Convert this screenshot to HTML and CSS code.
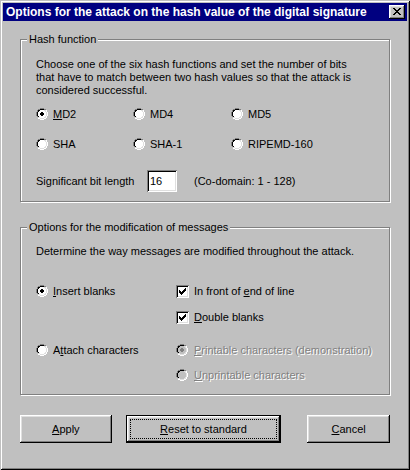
FILE: index.html
```html
<!DOCTYPE html>
<html lang="en">
<head>
<meta charset="utf-8">
<title>Options</title>
<link rel="stylesheet" href="styles.css">
</head>
<body>
<svg class="defs" width="0" height="0" aria-hidden="true">
  <defs>
    <symbol id="radio-frame" viewBox="0 0 12 12">
      <path fill="#808080" d="M4 0h4v1H4zM2 1h2v1H2zM8 1h2v1H8zM1 2h1v2H1zM0 4h1v4H0zM1 8h1v1H1z"/>
      <path fill="#000" d="M4 1h4v1H4zM2 2h2v1H2zM2 3h1v1H2zM1 4h1v4H1zM2 8h1v1H2z"/>
      <path fill="#dfdfdf" d="M8 2h2v1H8zM9 3h1v1H9zM10 4h1v4h-1zM9 8h1v1H9zM2 9h2v1H2zM8 9h2v1H8zM4 10h4v1H4z"/>
      <path fill="#fff" d="M10 2h1v2h-1zM11 4h1v4h-1zM10 8h1v2h-1zM2 10h2v1H2zM8 10h2v1H8zM4 11h4v1H4z"/>
    </symbol>
    <symbol id="radio-fill" viewBox="0 0 12 12">
      <path d="M4 2h4v1H4zM3 3h6v1H3zM2 4h8v4H2zM3 8h6v1H3zM4 9h4v1H4z"/>
    </symbol>
    <symbol id="radio-dot" viewBox="0 0 12 12">
      <path d="M5 4h2v1H5zM4 5h4v2H4zM5 7h2v1H5z"/>
    </symbol>
  </defs>
</svg>

<div class="window">
  <div class="titlebar">
    <span class="title">Options for the attack on the hash value of the digital signature</span>
    <span class="close">
      <svg width="8" height="7" viewBox="0 0 8 7" shape-rendering="crispEdges"><path fill="#000" d="M0 0h2v1H0zM6 0h2v1H6zM1 1h2v1H1zM5 1h2v1H5zM2 2h4v1H2zM3 3h2v1H3zM2 4h4v1H2zM1 5h2v1H1zM5 5h2v1H5zM0 6h2v1H0zM6 6h2v1H6z"/></svg>
    </span>
  </div>

  <div class="content">
    <div class="group group-hash">
      <span class="legend">Hash function</span>
      <p class="desc">Choose one of the six hash functions and set the number of bits<br>that have to match between two hash values so that the attack is<br>considered successful.</p>

      <div class="radio-grid">
        <div class="opt"><svg class="radio" width="12" height="12" shape-rendering="crispEdges"><use href="#radio-fill" fill="#fff"/><use href="#radio-frame"/><use href="#radio-dot" fill="#000"/></svg><span class="lbl"><u>M</u>D2</span></div>
        <div class="opt"><svg class="radio" width="12" height="12" shape-rendering="crispEdges"><use href="#radio-fill" fill="#fff"/><use href="#radio-frame"/></svg><span class="lbl">MD4</span></div>
        <div class="opt"><svg class="radio" width="12" height="12" shape-rendering="crispEdges"><use href="#radio-fill" fill="#fff"/><use href="#radio-frame"/></svg><span class="lbl">MD5</span></div>
        <div class="opt"><svg class="radio" width="12" height="12" shape-rendering="crispEdges"><use href="#radio-fill" fill="#fff"/><use href="#radio-frame"/></svg><span class="lbl">SHA</span></div>
        <div class="opt"><svg class="radio" width="12" height="12" shape-rendering="crispEdges"><use href="#radio-fill" fill="#fff"/><use href="#radio-frame"/></svg><span class="lbl">SHA-1</span></div>
        <div class="opt"><svg class="radio" width="12" height="12" shape-rendering="crispEdges"><use href="#radio-fill" fill="#fff"/><use href="#radio-frame"/></svg><span class="lbl">RIPEMD-160</span></div>
      </div>

      <div class="bits">
        <span class="bits-label">Significant bit length</span>
        <span class="input">16</span>
        <span class="range">(Co-domain: 1 - 128)</span>
      </div>
    </div>

    <div class="group group-mod">
      <span class="legend">Options for the modification of messages</span>
      <p class="desc">Determine the way messages are modified throughout the attack.</p>

      <div class="row row-1">
        <div class="col-a opt"><svg class="radio" width="12" height="12" shape-rendering="crispEdges"><use href="#radio-fill" fill="#fff"/><use href="#radio-frame"/><use href="#radio-dot" fill="#000"/></svg><span class="lbl"><u>I</u>nsert blanks</span></div>
        <div class="opt check-opt"><span class="check"><svg width="7" height="7" viewBox="0 0 7 7" shape-rendering="crispEdges"><path fill="#000" d="M6 0h1v1H6zM5 1h2v1H5zM0 2h1v1H0zM4 2h3v1H4zM0 3h2v1H0zM3 3h3v1H3zM0 4h5v1H0zM1 5h3v1H1zM2 6h1v1H2z"/></svg></span><span class="lbl-c">In front of <u>e</u>nd of line</span></div>
      </div>

      <div class="row row-2">
        <div class="col-a"></div>
        <div class="opt check-opt"><span class="check"><svg width="7" height="7" viewBox="0 0 7 7" shape-rendering="crispEdges"><path fill="#000" d="M6 0h1v1H6zM5 1h2v1H5zM0 2h1v1H0zM4 2h3v1H4zM0 3h2v1H0zM3 3h3v1H3zM0 4h5v1H0zM1 5h3v1H1zM2 6h1v1H2z"/></svg></span><span class="lbl-c"><u>D</u>ouble blanks</span></div>
      </div>

      <div class="row row-3">
        <div class="col-a opt"><svg class="radio" width="12" height="12" shape-rendering="crispEdges"><use href="#radio-fill" fill="#fff"/><use href="#radio-frame"/></svg><span class="lbl">A<u>t</u>tach characters</span></div>
        <div class="opt check-opt"><svg class="radio" width="12" height="12" shape-rendering="crispEdges"><use href="#radio-fill" fill="#c0c0c0"/><use href="#radio-frame"/><use href="#radio-dot" fill="#808080"/></svg><span class="lbl-c disabled"><u>P</u>rintable characters (demonstration)</span></div>
      </div>

      <div class="row row-4">
        <div class="col-a"></div>
        <div class="opt check-opt"><svg class="radio" width="12" height="12" shape-rendering="crispEdges"><use href="#radio-fill" fill="#c0c0c0"/><use href="#radio-frame"/></svg><span class="lbl-c disabled"><u>U</u>nprintable characters</span></div>
      </div>
    </div>

    <div class="buttons">
      <button class="btn btn-apply" type="button"><u>A</u>pply</button>
      <button class="btn btn-default btn-reset" type="button"><u>R</u>eset to standard</button>
      <button class="btn btn-cancel" type="button"><u>C</u>ancel</button>
    </div>
  </div>
</div>
</body>
</html>
```

FILE: styles.css
```css
html, body {
  margin: 0;
  padding: 0;
  background: #c0c0c0;
}

.defs {
  position: absolute;
  width: 0;
  height: 0;
  overflow: hidden;
}

.window {
  width: 410px;
  height: 470px;
  box-sizing: border-box;
  padding: 3px;
  background: #c0c0c0;
  box-shadow:
    inset 1px 1px 0 #c0c0c0,
    inset -1px -1px 0 #000,
    inset 2px 2px 0 #fff,
    inset -2px -2px 0 #808080;
  font-family: "Liberation Sans", Arial, sans-serif;
  font-size: 11px;
  line-height: 13px;
  color: #000;
}

.titlebar {
  height: 18px;
  background: #000080;
  display: flex;
  align-items: center;
  justify-content: space-between;
  padding-left: 3px;
  padding-right: 2px;
}

.title {
  color: #fff;
  font-weight: bold;
  font-size: 12px;
  white-space: nowrap;
}

.close {
  display: block;
  width: 16px;
  height: 14px;
  box-sizing: border-box;
  padding: 3px 0 0 4px;
  background: #c0c0c0;
  box-shadow:
    inset -1px -1px 0 #000,
    inset 1px 1px 0 #fff,
    inset -2px -2px 0 #808080,
    inset 2px 2px 0 #dfdfdf;
}

.close svg {
  display: block;
}

.content {
  padding: 0 17px;
}

.group {
  position: relative;
  border: 1px solid #808080;
  box-shadow: inset 1px 1px 0 #fff, 1px 1px 0 #fff;
  padding: 0 0 0 15px;
}

.legend {
  position: absolute;
  top: -7px;
  left: 6px;
  padding: 0 2px;
  background: #c0c0c0;
  white-space: nowrap;
}

.desc {
  margin: 0;
  white-space: nowrap;
}

.group-hash {
  margin-top: 18px;
  padding-top: 18px;
  padding-bottom: 9px;
}

.radio-grid {
  margin-top: 2px;
  display: grid;
  grid-template-columns: 97px 98px 1fr;
  grid-auto-rows: 30px;
}

.opt {
  display: flex;
  align-items: center;
  white-space: nowrap;
}

.radio {
  display: block;
  flex: none;
}

.lbl {
  margin-left: 5px;
}

.bits {
  margin-top: 11px;
  height: 22px;
  display: flex;
  align-items: center;
  white-space: nowrap;
}

.bits-label {
  width: 111px;
}

.input {
  width: 30px;
  height: 22px;
  box-sizing: border-box;
  padding-left: 3px;
  line-height: 22px;
  background: #fff;
  box-shadow:
    inset 1px 1px 0 #808080,
    inset -1px -1px 0 #fff,
    inset 2px 2px 0 #000,
    inset -2px -2px 0 #dfdfdf;
}

.range {
  margin-left: 17px;
}

.group-mod {
  margin-top: 25px;
  padding-top: 17px;
  padding-bottom: 9px;
}

.row {
  display: flex;
  height: 20px;
  align-items: center;
}

.row-1 { margin-top: 23px; }
.row-2 { margin-top: 6px; }
.row-3 { margin-top: 13px; }
.row-4 { margin-top: 5px; }

.col-a {
  width: 140px;
  flex: none;
}

.check {
  width: 13px;
  height: 13px;
  flex: none;
  box-sizing: border-box;
  padding: 3px;
  background: #fff;
  box-shadow:
    inset 1px 1px 0 #808080,
    inset -1px -1px 0 #fff,
    inset 2px 2px 0 #000,
    inset -2px -2px 0 #dfdfdf;
}

.check svg {
  display: block;
}

.lbl-c {
  margin-left: 5px;
}

.check-opt .radio + .lbl-c {
  margin-left: 6px;
}

.disabled {
  color: #808080;
  text-shadow: 1px 1px 0 #fff;
}

.buttons {
  margin-top: 20px;
  display: flex;
}

.btn {
  height: 28px;
  box-sizing: border-box;
  padding: 0;
  border: 0;
  background: #c0c0c0;
  font: inherit;
  color: #000;
  text-align: center;
  box-shadow:
    inset -1px -1px 0 #000,
    inset 1px 1px 0 #fff,
    inset -2px -2px 0 #808080,
    inset 2px 2px 0 #dfdfdf;
}

.btn-apply {
  width: 92px;
}

.btn-reset {
  width: 156px;
  margin-left: 14px;
}

.btn-cancel {
  width: 83px;
  margin-left: 26px;
}

.btn-default {
  border: 1px solid #000;
  outline: 1px dotted #000;
  outline-offset: -5px;
}
```
